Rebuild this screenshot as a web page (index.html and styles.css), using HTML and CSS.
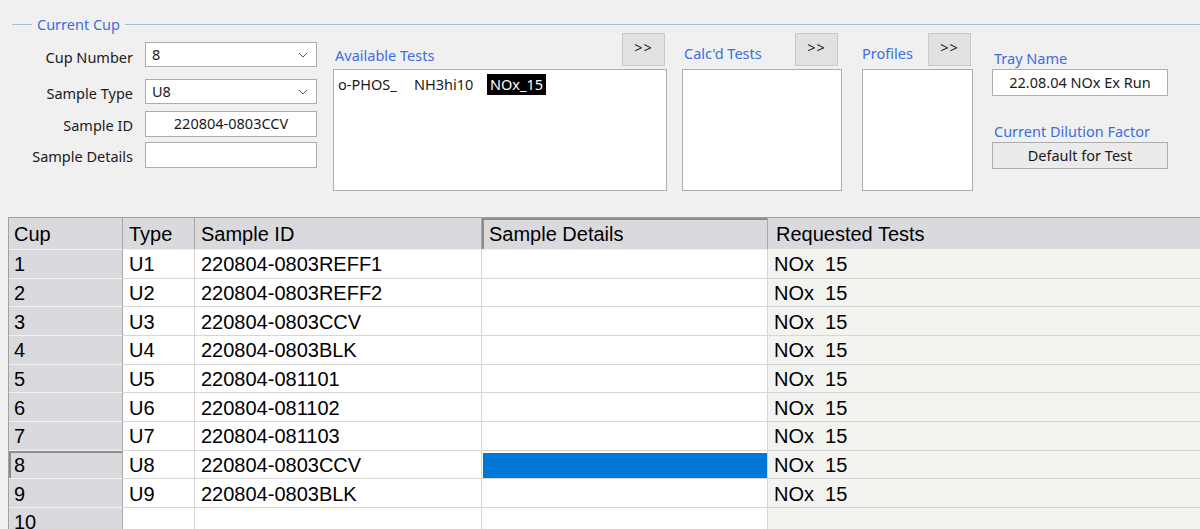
FILE: index.html
```html
<!DOCTYPE html>
<html lang="en">
<head>
  <meta charset="UTF-8">
  <title>Tray Editor</title>
  <link rel="stylesheet" href="styles.css">
</head>
<body>
  <div class="group-title"><span>Current Cup</span></div>

  <div class="panels">
    <!-- cup form -->
    <div class="cup-form">
      <div class="field field-cup">
        <label>Cup Number</label>
        <div class="combo">8
          <svg class="chevron" width="10" height="6" viewBox="0 0 10 6"><polyline points="1,1 5,5 9,1" fill="none" stroke="#555" stroke-width="1"/></svg>
        </div>
      </div>
      <div class="field field-type">
        <label>Sample Type</label>
        <div class="combo">U8
          <svg class="chevron" width="10" height="6" viewBox="0 0 10 6"><polyline points="1,1 5,5 9,1" fill="none" stroke="#555" stroke-width="1"/></svg>
        </div>
      </div>
      <div class="field field-id">
        <label>Sample ID</label>
        <div class="textbox center">220804-0803CCV</div>
      </div>
      <div class="field field-details">
        <label>Sample Details</label>
        <div class="textbox"></div>
      </div>
    </div>

    <!-- tests -->
    <div class="list-panel available">
      <div class="list-head">
        <span class="blue-label">Available Tests</span>
        <button class="add-btn">&gt;&gt;</button>
      </div>
      <div class="listbox">
        <span class="opt opt-1">o-PHOS_</span><span class="opt opt-2">NH3hi10</span><span class="opt selected">NOx_15</span>
      </div>
    </div>

    <div class="list-panel calcd">
      <div class="list-head">
        <span class="blue-label">Calc'd Tests</span>
        <button class="add-btn">&gt;&gt;</button>
      </div>
      <div class="listbox"></div>
    </div>

    <div class="list-panel profiles">
      <div class="list-head">
        <span class="blue-label">Profiles</span>
        <button class="add-btn">&gt;&gt;</button>
      </div>
      <div class="listbox"></div>
    </div>

    <div class="tray">
      <span class="blue-label">Tray Name</span>
      <div class="textbox center tray-name">22.08.04 NOx Ex Run</div>
      <span class="blue-label dilution-label">Current Dilution Factor</span>
      <div class="readonly-box">Default for Test</div>
    </div>
  </div>

  <div class="grid-wrap">
    <table class="grid">
      <thead>
        <tr>
          <th class="c-cup">Cup</th>
          <th class="c-type">Type</th>
          <th class="c-id">Sample ID</th>
          <th class="c-details current-col">Sample Details</th>
          <th class="c-tests">Requested Tests</th>
        </tr>
      </thead>
      <tbody>
        <tr><td class="row-head">1</td><td>U1</td><td>220804-0803REFF1</td><td></td><td class="tests">NOx&nbsp;&nbsp;15</td></tr>
        <tr><td class="row-head">2</td><td>U2</td><td>220804-0803REFF2</td><td></td><td class="tests">NOx&nbsp;&nbsp;15</td></tr>
        <tr><td class="row-head">3</td><td>U3</td><td>220804-0803CCV</td><td></td><td class="tests">NOx&nbsp;&nbsp;15</td></tr>
        <tr><td class="row-head">4</td><td>U4</td><td>220804-0803BLK</td><td></td><td class="tests">NOx&nbsp;&nbsp;15</td></tr>
        <tr><td class="row-head">5</td><td>U5</td><td>220804-081101</td><td></td><td class="tests">NOx&nbsp;&nbsp;15</td></tr>
        <tr><td class="row-head">6</td><td>U6</td><td>220804-081102</td><td></td><td class="tests">NOx&nbsp;&nbsp;15</td></tr>
        <tr><td class="row-head">7</td><td>U7</td><td>220804-081103</td><td></td><td class="tests">NOx&nbsp;&nbsp;15</td></tr>
        <tr class="current-row"><td class="row-head">8</td><td>U8</td><td>220804-0803CCV</td><td class="selected-cell"></td><td class="tests">NOx&nbsp;&nbsp;15</td></tr>
        <tr><td class="row-head">9</td><td>U9</td><td>220804-0803BLK</td><td></td><td class="tests">NOx&nbsp;&nbsp;15</td></tr>
        <tr><td class="row-head">10</td><td></td><td></td><td></td><td class="tests"></td></tr>
      </tbody>
    </table>
  </div>
</body>
</html>
```

FILE: styles.css
```css
* {
  box-sizing: border-box;
}
body {
  margin: 0;
  background-color: #f0f0f0;
  font-family: "Noto Sans", sans-serif;
  font-size: 14.5px;
  color: #1a1a1a;
  overflow: hidden;
  height: 529px;
}

/* group box title */
.group-title {
  display: flex;
  align-items: center;
  height: 18px;
  margin-top: 15px;
}
.group-title::before {
  content: "";
  width: 20px;
  height: 1px;
  margin-left: 12px;
  background-color: #a9bcd6;
}
.group-title::after {
  content: "";
  flex: 1;
  height: 1px;
  background-color: #a9bcd6;
}
.group-title span {
  color: #3d6de0;
  padding: 0 5px;
  line-height: 18px;
}

.panels {
  display: flex;
  align-items: flex-start;
}

/* left form */
.cup-form {
  width: 333px;
  padding-top: 9px;
}
.field {
  display: flex;
  align-items: center;
}
.field label {
  width: 133px;
  text-align: right;
  padding-top: 2px;
  margin-right: 12px;
}
.field-cup label { padding-top: 5px; }
.field-cup { height: 25px; }
.field-type { height: 25px; margin-top: 12px; }
.field-id { height: 26px; margin-top: 7px; }
.field-details { height: 26px; margin-top: 5px; }

.combo,
.textbox {
  position: relative;
  width: 172px;
  height: 100%;
  background-color: #fff;
  border: 1px solid #adadad;
  padding-left: 6px;
  line-height: 23px;
  white-space: nowrap;
}
.textbox.center {
  text-align: center;
  padding-left: 0;
}
.chevron {
  position: absolute;
  right: 8px;
  top: 9px;
}

/* list boxes */
.list-head {
  display: flex;
  justify-content: space-between;
  align-items: flex-end;
  height: 33px;
  margin-bottom: 3px;
}
.blue-label {
  color: #3d6de0;
  line-height: 20px;
}
.add-btn {
  width: 43px;
  height: 33px;
  background-color: #e1e1e1;
  border: 1px solid #c8c8c8;
  font-family: "Noto Sans", sans-serif;
  font-size: 14.5px;
  color: #1a1a1a;
  padding: 0 0 6px;
  letter-spacing: 1px;
}
.listbox {
  height: 122px;
  background-color: #fff;
  border: 1px solid #adadad;
  padding: 4px 0 0 4px;
  white-space: nowrap;
}
.available {
  width: 334px;
}
.available .list-head .blue-label {
  margin-left: 2px;
  margin-bottom: 1px;
}
.available .add-btn {
  margin-right: 2px;
}
.calcd {
  width: 160px;
  margin-left: 15px;
}
.calcd .blue-label,
.profiles .blue-label {
  margin-left: 2px;
  margin-bottom: 3px;
}
.profiles .blue-label {
  margin-left: 0;
}
.calcd .add-btn {
  margin-right: 4px;
}
.profiles {
  width: 111px;
  margin-left: 20px;
}
.profiles .add-btn {
  margin-right: 2px;
}
.opt {
  display: inline-block;
  line-height: 21px;
}
.opt-1 { width: 76px; }
.opt-2 { width: 73px; }
.opt.selected {
  background-color: #000;
  color: #fff;
  padding: 0 3px;
}

/* tray */
.tray {
  width: 176px;
  margin-left: 19px;
  padding-top: 15px;
  display: flex;
  flex-direction: column;
}
.tray .blue-label {
  margin-left: 2px;
}
.tray-name {
  width: 176px;
  height: 27px;
  margin-top: 1px;
  line-height: 25px;
}
.dilution-label {
  margin-top: 25px;
}
.readonly-box {
  height: 27px;
  margin-top: 1px;
  border: 1px solid #adadad;
  background-color: #ebebeb;
  text-align: center;
  line-height: 25px;
}

/* data grid */
.grid-wrap {
  margin: 26px 0 0 8px;
}
.grid {
  width: 1192px;
  table-layout: fixed;
  border-collapse: separate;
  border-spacing: 0;
  border-top: 1px solid #a0a0a0;
  border-left: 1px solid #a0a0a0;
  font-family: "Liberation Sans", Arial, sans-serif;
  font-size: 20px;
  color: #000;
}
.grid th,
.grid td {
  text-align: left;
  font-weight: normal;
  padding: 0 0 0 5px;
  white-space: nowrap;
  overflow: hidden;
}
.grid th {
  height: 32px;
  background-color: #dadade;
  border-right: 1px solid #a8a8a8;
  border-bottom: 1px solid #f2f2f2;
  padding-top: 2px;
}
.c-cup { width: 114px; }
.c-type { width: 72px; }
.c-id { width: 287px; }
.c-details { width: 286px; }
.grid th.c-type,
.grid th.c-id,
.grid th.c-details { padding-left: 6px; }
.grid th.c-tests {
  padding-left: 8px;
  border-right: none;
}
.grid th.current-col {
  box-shadow: inset 2px 2px 0 #8c8c8c;
  padding-left: 7px;
}
.grid td {
  height: 28.67px;
  background-color: #fff;
  border-right: 1px solid #d6d6d6;
  border-bottom: 1px solid #d6d6d6;
  padding-left: 6px;
  padding-top: 2px;
}
.grid td.row-head {
  background-color: #dadade;
  border-right: 1px solid #a8a8a8;
  border-bottom: 1px solid #f2f2f2;
  padding-left: 5px;
}
.grid td.tests {
  background-color: #f3f3ef;
  border-right: none;
}
.current-row td.row-head {
  box-shadow: inset 2px 2px 0 #8c8c8c;
}
.grid td.selected-cell {
  background-color: #0078d7;
  box-shadow: inset 1px 2px 0 #fff;
}
```
